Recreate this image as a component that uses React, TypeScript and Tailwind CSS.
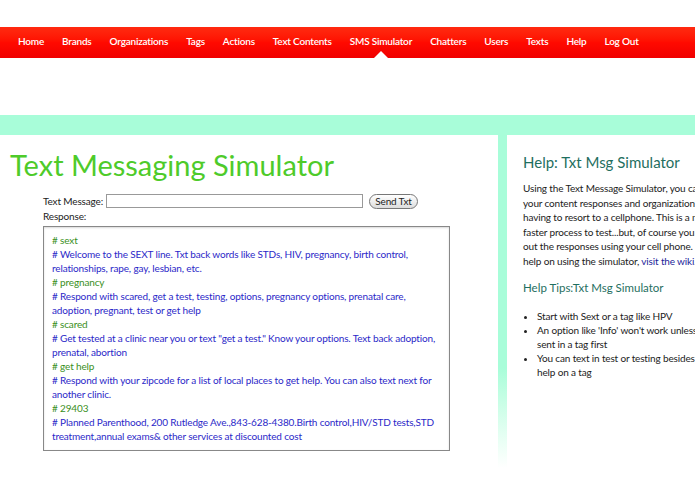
import React from 'react';

const navItems = ['Home', 'Brands', 'Organizations', 'Tags', 'Actions', 'Text Contents', 'SMS Simulator', 'Chatters', 'Users', 'Texts', 'Help', 'Log Out'];

// cmd = what was sent (green), otherwise the reply (blue)
const responses: { cmd: boolean; lines: string[] }[] = [
    { cmd: true, lines: ['# sext'] },
    { cmd: false, lines: ['# Welcome to the SEXT line. Txt back words like STDs, HIV, pregnancy, birth control,', 'relationships, rape, gay, lesbian, etc.'] },
    { cmd: true, lines: ['# pregnancy'] },
    { cmd: false, lines: ['# Respond with scared, get a test, testing, options, pregnancy options, prenatal care,', 'adoption, pregnant, test or get help'] },
    { cmd: true, lines: ['# scared'] },
    { cmd: false, lines: ['# Get tested at a clinic near you or text "get a test." Know your options. Text back adoption,', 'prenatal, abortion'] },
    { cmd: true, lines: ['# get help'] },
    { cmd: false, lines: ['# Respond with your zipcode for a list of local places to get help. You can also text next for', 'another clinic.'] },
    { cmd: true, lines: ['# 29403'] },
    { cmd: false, lines: ['# Planned Parenthood, 200 Rutledge Ave.,843-628-4380.Birth control,HIV/STD tests,STD', 'treatment,annual exams& other services at discounted cost'] },
];

const helpLines = [
    'Using the Text Message Simulator, you can test',
    'your content responses and organizations without',
    'having to resort to a cellphone. This is a much',
    'faster process to test...but, of course you can test',
    'out the responses using your cell phone. For more',
];

const tips = [
    ['Start with Sext or a tag like HPV'],
    ["An option like 'Info' won't work unless you've", 'sent in a tag first'],
    ['You can text in test or testing besides asking for', 'help on a tag'],
];

export default function App() {
    return (
        <div className="w-[695px] h-[494px] overflow-hidden bg-white font-['Lato',sans-serif] text-[#222]">
            {/* Nav */}
            <div className="pt-[27px]">
                <div className="h-[31px] bg-gradient-to-b from-[#ff2a10] via-[#ff0a00] to-[#f00000] flex items-center pl-[9px]">
                    {navItems.map(item => (
                        <div key={item} className="relative h-full flex items-center pb-[3px] px-[9px] text-white text-[10px] tracking-[-0.2px] font-semibold whitespace-nowrap">
                            {item}
                            {item === 'SMS Simulator' && (
                                <div className="absolute bottom-0 left-1/2 -translate-x-1/2 w-0 h-0 border-l-[7px] border-r-[7px] border-b-[7px] border-l-transparent border-r-transparent border-b-white" />
                            )}
                        </div>
                    ))}
                </div>
            </div>

            <div className="h-[57px]" />
            <div className="h-[20px] bg-[#a8fdd9]" />

            <div className="flex">
                {/* Left */}
                <div className="w-[498px] shrink-0">
                    <h1 className="mt-[13px] pl-[10px] text-[29px] leading-[34px] text-[#4ecb2a] font-normal">Text Messaging Simulator</h1>
                    <div className="pl-[43px] mt-[11px] text-[10px] tracking-[-0.15px]">
                        <div className="flex items-center h-[16px]">
                            <span className="whitespace-nowrap mr-[3px] w-[60px]">Text Message:</span>
                            <input className="w-[257px] h-[14px] border border-[#999] bg-white" />
                            <button className="ml-[6px] w-[49px] h-[15px] rounded-full border border-[#777] bg-gradient-to-b from-white to-[#ddd] text-[10px] leading-none">Send Txt</button>
                        </div>
                        <div className="leading-[14px]">Response:</div>
                        <div className="mt-[3px] w-[407px] h-[225px] border border-[#888] shadow-[inset_0_1px_2px_rgba(0,0,0,0.15)] pl-[8px] pt-[6px] leading-[14px]">
                            {responses.map((r, i) => (
                                <div key={i} className={r.cmd ? 'text-[#3a8f1c]' : 'text-[#2b28c8]'}>
                                    {r.lines.map((l, j) => (
                                        <div key={j} className="whitespace-nowrap">{l}</div>
                                    ))}
                                </div>
                            ))}
                        </div>
                    </div>
                </div>

                {/* Divider stripe */}
                <div className="w-[9px] shrink-0 h-[333px] bg-gradient-to-b from-[#a8fdd9] from-70% to-white" />

                {/* Right */}
                <div className="flex-1 overflow-hidden pl-[16px]">
                    <h2 className="mt-[16px] text-[15px] leading-[22px] text-[#1f6f5f] whitespace-nowrap">Help: Txt Msg Simulator</h2>
                    <div className="mt-[8px] text-[10px] tracking-[-0.15px] leading-[14.5px] whitespace-nowrap">
                        {helpLines.map(l => <div key={l}>{l}</div>)}
                        <div>help on using the simulator, <span className="text-[#1c1c99]">visit the wiki.</span></div>
                    </div>
                    <h3 className="mt-[11px] text-[11.5px] leading-[18px] text-[#1f6f5f] whitespace-nowrap">Help Tips:Txt Msg Simulator</h3>
                    <ul className="mt-[12px] pl-[14px] text-[10px] tracking-[-0.15px] leading-[14px] whitespace-nowrap list-disc">
                        {tips.map((t, i) => (
                            <li key={i}>
                                {t.map((l, j) => <div key={j}>{l}</div>)}
                            </li>
                        ))}
                    </ul>
                </div>
            </div>
        </div>
    );
}
